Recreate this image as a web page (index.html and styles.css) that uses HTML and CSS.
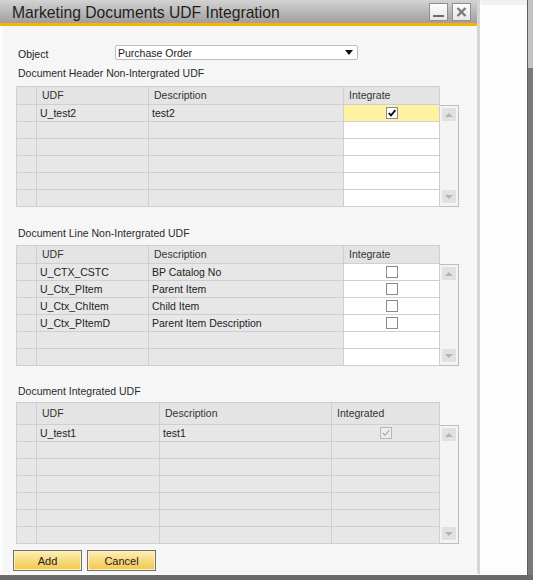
FILE: index.html
```html
<!DOCTYPE html>
<html lang="en">
<head>
    <meta charset="UTF-8">
    <title>Marketing Documents UDF Integration</title>
    <link rel="stylesheet" href="styles.css">
</head>
<body>
    <div class="screen">
        <div class="main">
            <div class="window">
                <div class="titlebar">
                    <span class="title">Marketing Documents UDF Integration</span>
                    <div class="win-btns">
                        <div class="win-btn min"><span class="min-bar"></span></div>
                        <div class="win-btn">
                            <svg width="11" height="10" viewBox="0 0 11 10"><path d="M1.5 1 L9.5 9 M9.5 1 L1.5 9" stroke="#7a7a7a" stroke-width="2.4" fill="none"/></svg>
                        </div>
                    </div>
                </div>

                <div class="content">
                    <div class="field">
                        <span class="field-label">Object</span>
                        <div class="select">
                            <span>Purchase Order</span>
                            <span class="select-arrow"></span>
                        </div>
                    </div>

                    <!-- naglowki dokumentu -->
                    <div class="section first">
                        <div class="section-label">Document Header Non-Intergrated UDF</div>
                        <div class="grid-wrap">
                            <div class="grid cols-a">
                                <div class="row head">
                                    <div class="cell"></div>
                                    <div class="cell">UDF</div>
                                    <div class="cell">Description</div>
                                    <div class="cell">Integrate</div>
                                </div>
                                <div class="row">
                                    <div class="cell"></div>
                                    <div class="cell">U_test2</div>
                                    <div class="cell">test2</div>
                                    <div class="cell box current"><span class="check"><svg width="10" height="10" viewBox="0 0 10 10"><path d="M1.8 5 L4 7.3 L8.4 2.2" stroke="#000" stroke-width="1.8" fill="none"/></svg></span></div>
                                </div>
                                <div class="row"><div class="cell"></div><div class="cell"></div><div class="cell"></div><div class="cell box"></div></div>
                                <div class="row"><div class="cell"></div><div class="cell"></div><div class="cell"></div><div class="cell box"></div></div>
                                <div class="row"><div class="cell"></div><div class="cell"></div><div class="cell"></div><div class="cell box"></div></div>
                                <div class="row"><div class="cell"></div><div class="cell"></div><div class="cell"></div><div class="cell box"></div></div>
                                <div class="row"><div class="cell"></div><div class="cell"></div><div class="cell"></div><div class="cell box"></div></div>
                            </div>
                            <div class="scroll rows-6">
                                <div class="arrow"><span class="tri up"></span></div>
                                <div class="arrow"><span class="tri down"></span></div>
                            </div>
                        </div>
                    </div>

                    <!-- linie dokumentu -->
                    <div class="section second">
                        <div class="section-label">Document Line Non-Intergrated UDF</div>
                        <div class="grid-wrap">
                            <div class="grid cols-a">
                                <div class="row head">
                                    <div class="cell"></div>
                                    <div class="cell">UDF</div>
                                    <div class="cell">Description</div>
                                    <div class="cell">Integrate</div>
                                </div>
                                <div class="row">
                                    <div class="cell"></div>
                                    <div class="cell">U_CTX_CSTC</div>
                                    <div class="cell">BP Catalog No</div>
                                    <div class="cell box"><span class="check"></span></div>
                                </div>
                                <div class="row">
                                    <div class="cell"></div>
                                    <div class="cell">U_Ctx_PItem</div>
                                    <div class="cell">Parent Item</div>
                                    <div class="cell box"><span class="check"></span></div>
                                </div>
                                <div class="row">
                                    <div class="cell"></div>
                                    <div class="cell">U_Ctx_ChItem</div>
                                    <div class="cell">Child Item</div>
                                    <div class="cell box"><span class="check"></span></div>
                                </div>
                                <div class="row">
                                    <div class="cell"></div>
                                    <div class="cell">U_Ctx_PItemD</div>
                                    <div class="cell">Parent Item Description</div>
                                    <div class="cell box"><span class="check"></span></div>
                                </div>
                                <div class="row"><div class="cell"></div><div class="cell"></div><div class="cell"></div><div class="cell box"></div></div>
                                <div class="row"><div class="cell"></div><div class="cell"></div><div class="cell"></div><div class="cell box"></div></div>
                            </div>
                            <div class="scroll rows-6">
                                <div class="arrow"><span class="tri up"></span></div>
                                <div class="arrow"><span class="tri down"></span></div>
                            </div>
                        </div>
                    </div>

                    <!-- juz zintegrowane -->
                    <div class="section third">
                        <div class="section-label">Document Integrated UDF</div>
                        <div class="grid-wrap">
                            <div class="grid cols-b">
                                <div class="row head tall">
                                    <div class="cell"></div>
                                    <div class="cell">UDF</div>
                                    <div class="cell">Description</div>
                                    <div class="cell">Integrated</div>
                                </div>
                                <div class="row">
                                    <div class="cell"></div>
                                    <div class="cell">U_test1</div>
                                    <div class="cell">test1</div>
                                    <div class="cell centered"><span class="check disabled"><svg width="10" height="10" viewBox="0 0 10 10"><path d="M1.8 5 L4 7.3 L8.4 2.2" stroke="#a5a5a5" stroke-width="1.1" fill="none"/></svg></span></div>
                                </div>
                                <div class="row"><div class="cell"></div><div class="cell"></div><div class="cell"></div><div class="cell"></div></div>
                                <div class="row"><div class="cell"></div><div class="cell"></div><div class="cell"></div><div class="cell"></div></div>
                                <div class="row"><div class="cell"></div><div class="cell"></div><div class="cell"></div><div class="cell"></div></div>
                                <div class="row"><div class="cell"></div><div class="cell"></div><div class="cell"></div><div class="cell"></div></div>
                                <div class="row"><div class="cell"></div><div class="cell"></div><div class="cell"></div><div class="cell"></div></div>
                                <div class="row"><div class="cell"></div><div class="cell"></div><div class="cell"></div><div class="cell"></div></div>
                            </div>
                            <div class="scroll rows-7">
                                <div class="arrow"><span class="tri up"></span></div>
                                <div class="arrow"><span class="tri down"></span></div>
                            </div>
                        </div>
                    </div>

                    <div class="actions">
                        <button class="btn">Add</button>
                        <button class="btn">Cancel</button>
                    </div>
                </div>
            </div>
            <div class="side"></div>
            <div class="edge"></div>
        </div>
        <div class="taskbar"></div>
    </div>
</body>
</html>
```

FILE: styles.css
```css
* {
    box-sizing: border-box;
}
body {
    margin: 0;
    font-family: "Liberation Sans", Arial, sans-serif;
    font-size: 10.5px;
    color: #222;
    background: #6d6d6d;
}
.screen {
    width: 533px;
    height: 580px;
    display: flex;
    flex-direction: column;
    overflow: hidden;
}
.main {
    display: flex;
    height: 575px;
}
.window {
    flex: 0 0 480px;
    display: flex;
    flex-direction: column;
    background: #f6f6f6;
    border-right: 3px solid #d6d6d6;
    border-bottom: 2px solid #fafafa;
}
.titlebar {
    height: 26px;
    border-bottom: 3px solid #f5b400;
    background: linear-gradient(#d3d3d3, #9f9f9f);
    display: flex;
    align-items: center;
    justify-content: space-between;
    padding: 0 6px 0 12px;
}
.title {
    font-size: 15.7px;
    color: #1e1e1e;
    padding-top: 2px;
}
.win-btns {
    display: flex;
    gap: 4px;
}
.win-btn {
    width: 19px;
    height: 18px;
    border: 1px solid #8f8f8f;
    background: linear-gradient(#fdfdfd, #e6e6e6);
    display: flex;
    align-items: center;
    justify-content: center;
}
.win-btn.min {
    align-items: flex-end;
    padding-bottom: 3px;
}
.min-bar {
    width: 11px;
    height: 2px;
    background: #6a6a6a;
}
.content {
    flex: 1;
    padding: 19px 0 0 13px;
    box-shadow: inset 3px 0 #fcfcfc;
}
.field {
    display: flex;
    align-items: center;
    height: 15px;
    margin-left: 5px;
}
.field-label {
    width: 97px;
    padding-top: 2px;
}
.select {
    width: 243px;
    height: 15px;
    background: #fff;
    border: 1px solid #bdbdbd;
    border-radius: 2px;
    display: flex;
    align-items: center;
    justify-content: space-between;
    padding: 0 4px 0 2px;
}
.select-arrow {
    width: 0;
    height: 0;
    border-left: 4px solid transparent;
    border-right: 4px solid transparent;
    border-top: 5px solid #111;
}
.section-label {
    height: 14px;
    line-height: 14px;
    margin-left: 5px;
    color: #2a2a2a;
}
.section.first {
    margin-top: 6px;
}
.section.first .section-label {
    margin-bottom: 6px;
}
.section.second {
    margin-top: 19px;
}
.section.second .section-label {
    margin-bottom: 5px;
}
.section.third {
    margin-top: 18px;
}
.section.third .section-label {
    margin-bottom: 4px;
}
.grid-wrap {
    display: flex;
    align-items: flex-start;
    margin-left: 3px;
}
.grid {
    border-left: 1px solid #cfcfcf;
    border-top: 1px solid #cfcfcf;
}
.row {
    display: grid;
    height: 17px;
}
.cols-a .row {
    grid-template-columns: 20px 112px 195px 96px;
}
.cols-b .row {
    grid-template-columns: 20px 123px 172px 108px;
}
.cell {
    border-right: 1px solid #cfcfcf;
    border-bottom: 1px solid #cfcfcf;
    background: #e7e7e7;
    padding-left: 3px;
    line-height: 16px;
    white-space: nowrap;
    overflow: hidden;
}
.head {
    height: 18px;
}
.head.tall {
    height: 22px;
}
.head .cell {
    padding-left: 5px;
    line-height: 17px;
    color: #333;
    background: #e4e4e4;
}
.head.tall .cell {
    line-height: 21px;
}
.cell.box {
    background: #fff;
}
.cell.current {
    background: #fff2a2;
}
.cell.box,
.cell.centered {
    display: flex;
    justify-content: center;
    align-items: center;
    padding-left: 0;
}
.check {
    width: 12px;
    height: 12px;
    border: 1px solid #8a8a8a;
    background: #fff;
    display: flex;
    align-items: center;
    justify-content: center;
}
.check.disabled {
    background: #ededed;
    border-color: #b8b8b8;
}
.scroll {
    width: 19px;
    border: 1px solid #bdbdbd;
    border-left: none;
    background: #f4f4f4;
    display: flex;
    flex-direction: column;
    justify-content: space-between;
    padding: 2px 2px 3px 2px;
}
.scroll.rows-6 {
    margin-top: 19px;
    height: 102px;
}
.scroll.rows-7 {
    margin-top: 23px;
    height: 119px;
}
.arrow {
    width: 14px;
    height: 13px;
    background: #e1e1e1;
    display: flex;
    align-items: center;
    justify-content: center;
}
.tri {
    width: 0;
    height: 0;
    border-left: 4px solid transparent;
    border-right: 4px solid transparent;
}
.tri.up {
    border-bottom: 4px solid #b3b3b3;
}
.tri.down {
    border-top: 4px solid #b3b3b3;
}
.actions {
    display: flex;
    gap: 5px;
    margin-top: 6px;
}
.btn {
    width: 69px;
    height: 21px;
    border: 1px solid #707070;
    background: linear-gradient(#fdefb4, #f2c64a);
    box-shadow: inset 0 0 0 1px #fcefc2;
    font-family: "Liberation Sans", Arial, sans-serif;
    font-size: 11px;
    color: #222;
    padding: 0;
}
.side {
    flex: 1;
    background: #fdfdfd;
    border-top: 5px solid #f1f1f1;
    border-left: 1px solid #fff;
}
.edge {
    flex: 0 0 6px;
    border-left: 1px solid #5d5d5d;
    background-color: #7a7a7a;
    background-image: linear-gradient(#c2c2c2, #c2c2c2);
    background-size: 100% 68px;
    background-repeat: no-repeat;
}
.taskbar {
    height: 5px;
    background: #6b6b6b;
}
```
